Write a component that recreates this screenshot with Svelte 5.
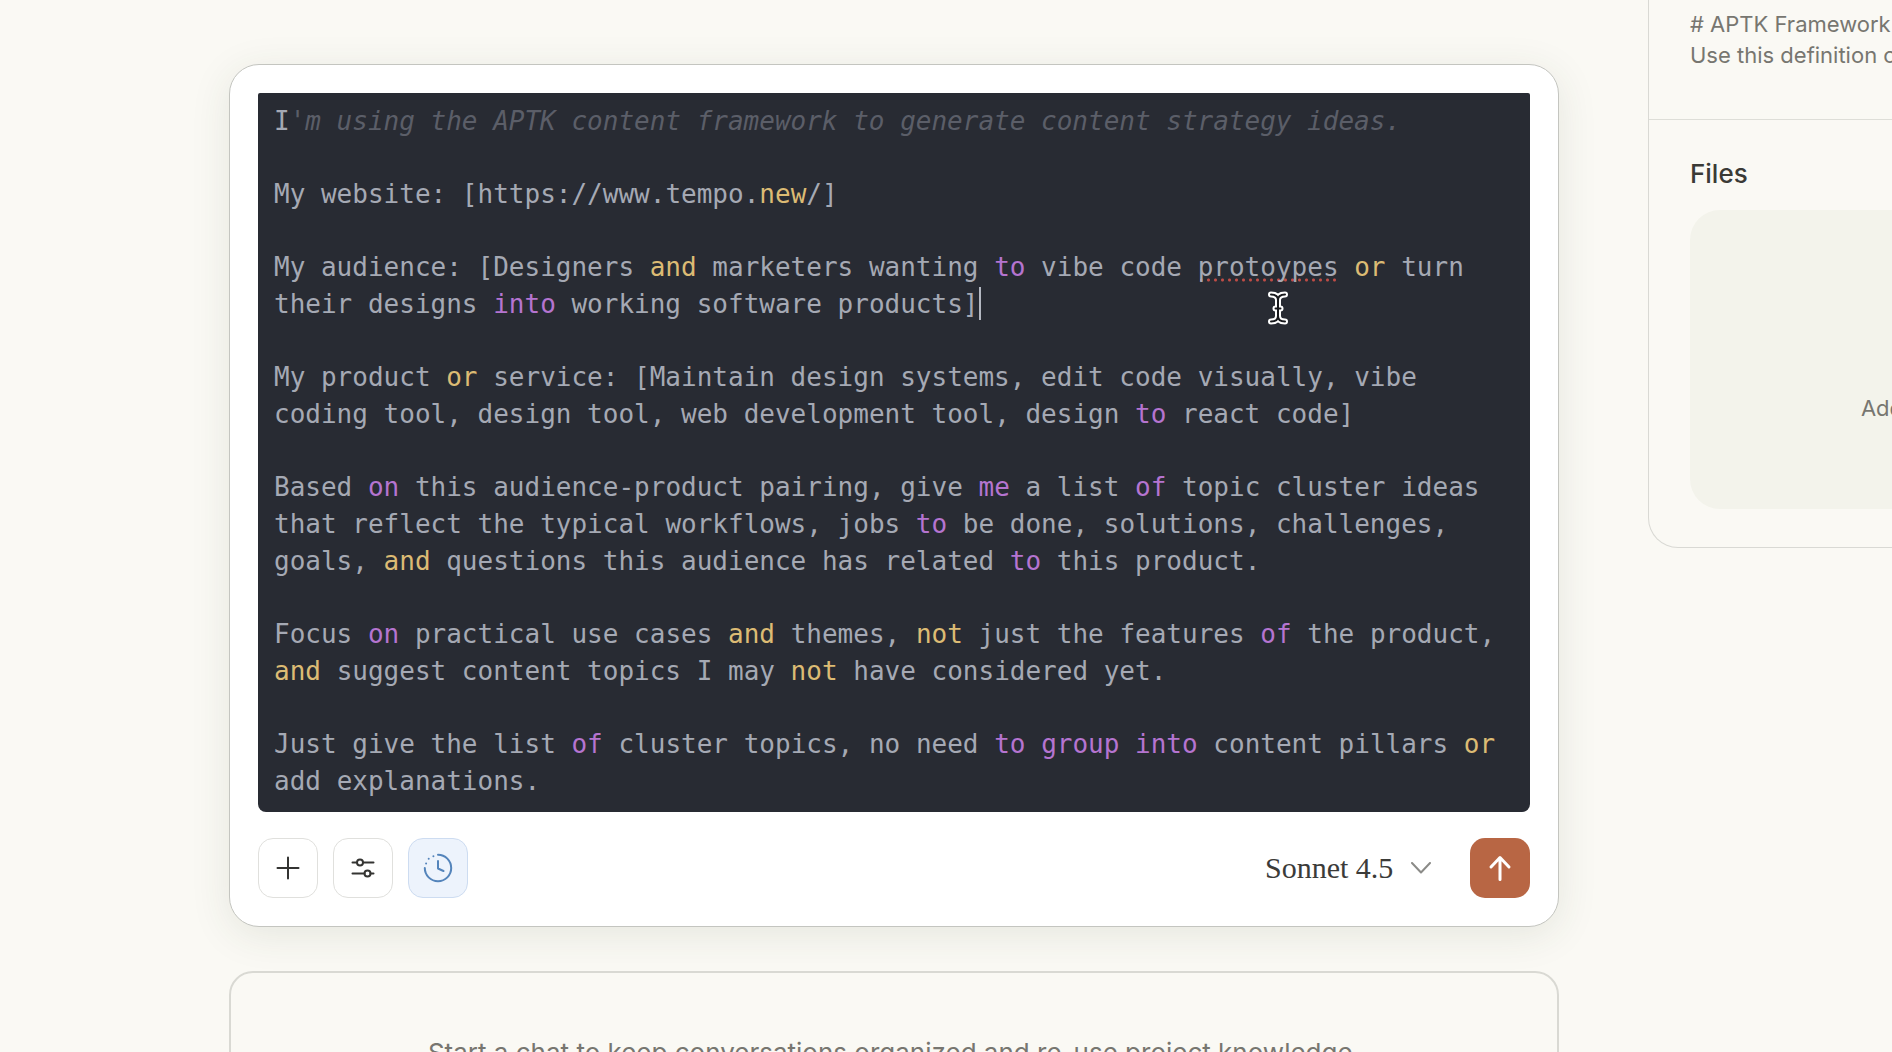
<script lang="ts">
    type Token = { text: string; kind: string };

    const keywords = ["to", "into", "on", "me", "of", "group"];
    const operators = ["and", "or", "not", "new"];
    const typos = ["protoypes"];

    const prompt = [
        "My website: [https://www.tempo.new/]",
        "My audience: [Designers and marketers wanting to vibe code protoypes or turn their designs into working software products]",
        "My product or service: [Maintain design systems, edit code visually, vibe coding tool, design tool, web development tool, design to react code]",
        "Based on this audience-product pairing, give me a list of topic cluster ideas that reflect the typical workflows, jobs to be done, solutions, challenges, goals, and questions this audience has related to this product.",
        "Focus on practical use cases and themes, not just the features of the product, and suggest content topics I may not have considered yet.",
        "Just give the list of cluster topics, no need to group into content pillars or add explanations.",
    ];
    const caret_line = 1;

    // Split a line into words and everything between them
    function tokenize(line: string): Token[] {
        return line.split(/(\w+)/).map((text) => {
            let kind = "plain";
            if (keywords.includes(text)) kind = "keyword";
            if (operators.includes(text)) kind = "operator";
            if (typos.includes(text)) kind = "typo";
            return { text, kind };
        });
    }

    let model = $state("Sonnet 4.5");
    let extended = $state(true);
</script>

<div class="page">
    <main>
        <form class="composer" onsubmit={(e) => e.preventDefault()}>
            <div class="editor">
                <div class="code" role="textbox" aria-multiline="true" aria-label="Prompt" tabindex="0" contenteditable="true" spellcheck="false">
                    <p>I<span class="comment">'m using the APTK content framework to generate content strategy ideas.</span></p>
                    {#each prompt as line, i}
                        <p>{#each tokenize(line) as token}{#if token.kind === "plain"}{token.text}{:else}<span class={token.kind}>{token.text}</span>{/if}{/each}{#if i === caret_line}<span class="caret"></span>{/if}</p>
                    {/each}
                </div>
                <svg class="pointer" viewBox="0 0 20 34" aria-hidden="true">
                    <path class="halo" d="M3 3.5C7 3.5 10 5 10 9V25C10 29 7 30.5 3 30.5M17 3.5C13 3.5 10 5 10 9V25C10 29 13 30.5 17 30.5M7.5 17.5H12.5" />
                    <path class="stem" d="M3 3.5C7 3.5 10 5 10 9V25C10 29 7 30.5 3 30.5M17 3.5C13 3.5 10 5 10 9V25C10 29 13 30.5 17 30.5M7.5 17.5H12.5" />
                </svg>
            </div>
            <div class="toolbar">
                <button type="button" class="tool" aria-label="Add">
                    <svg viewBox="0 0 30 30"><path d="M15 4.5V25.5M4.5 15H25.5" /></svg>
                </button>
                <button type="button" class="tool" aria-label="Tools">
                    <svg viewBox="0 0 30 30">
                        <path d="M4.5 9.500H9M15 9.500H25.500M4.500 20.500H16.500M22.500 20.500H25.500" />
                        <circle cx="12" cy="9.500" r="3" />
                        <circle cx="19.500" cy="20.500" r="3" />
                    </svg>
                </button>
                <button type="button" class="tool" class:active={extended} aria-label="Extended thinking" aria-pressed={extended} onclick={() => (extended = !extended)}>
                    <svg viewBox="0 0 30 30">
                        <path d="M15 1.8A13.200 13.200 0 1 1 1.800 15" />
                        <path d="M15 8V15.500L20.500 18" />
                        <path d="M3.100 10.500h.01M5.700 5.800h.01M10.400 3.200h.01" />
                    </svg>
                </button>
                <label class="model">
                    <select bind:value={model} aria-label="Model">
                        <option>Sonnet 4.5</option>
                    </select>
                    <svg viewBox="0 0 20 12"><path d="M1 1L10 10.500L19 1" /></svg>
                </label>
                <button type="submit" class="send" aria-label="Send">
                    <svg viewBox="0 0 24 26"><path d="M12 24.500V3M3 12L12 2.500L21 12" /></svg>
                </button>
            </div>
        </form>
        <section class="empty">
            <p>Start a chat to keep conversations organized and re-use project knowledge.</p>
        </section>
    </main>

    <aside>
        <div class="panel">
            <p class="instructions"># APTK Framework<br />Use this definition of</p>
            <section class="files">
                <h2>Files</h2>
                <div class="drop">Add</div>
            </section>
        </div>
    </aside>
</div>

<style>
    :global(body) {
        margin: 0;
        background: #faf9f4;
    }
    .page {
        box-sizing: border-box;
        display: grid;
        grid-template-columns: minmax(0, 1fr) 244px;
        gap: 89px;
        height: 100vh;
        padding-left: 229px;
        overflow: hidden;
        font-family: Inter, "Liberation Sans", sans-serif;
        color: #777670;
    }
    p,
    h2 {
        margin: 0;
    }
    svg {
        display: block;
        fill: none;
        stroke: currentColor;
        stroke-width: 2;
        stroke-linecap: round;
        stroke-linejoin: round;
    }
    main {
        display: flex;
        flex-direction: column;
        gap: 44px;
        padding-top: 64px;
    }

    .composer {
        padding: 28px 28px 28px;
        border: 1px solid #c4c5c0;
        border-radius: 30px;
        background: #fff;
        box-shadow: 0 8px 40px rgba(50, 65, 40, 0.1);
    }
    .editor {
        position: relative;
    }
    .code {
        display: flex;
        flex-direction: column;
        gap: 36px;
        padding: 10px 14px 12px 16px;
        border-radius: 2px 2px 8px 8px;
        background: #282b33;
        color: #a5a9b4;
        font-family: "DejaVu Sans Mono", monospace;
        font-size: 26px;
        line-height: 37px;
        outline: none;
    }
    .comment {
        color: #5b5e68;
        font-style: italic;
    }
    .keyword {
        color: #b574d0;
    }
    .operator {
        color: #dcbb74;
    }
    .typo {
        background: radial-gradient(circle, #c04c46 1px, transparent 2px) 0 100% / 7px 4px repeat-x;
    }
    .caret {
        display: inline-block;
        width: 2px;
        height: 33px;
        margin-left: 1px;
        vertical-align: -7px;
        background: #b4b8c2;
    }
    .pointer {
        position: absolute;
        top: 198px;
        left: 1010px;
        width: 20px;
        height: 34px;
    }
    .pointer .halo {
        stroke: #fff;
        stroke-width: 6;
    }
    .pointer .stem {
        stroke: #17181c;
    }

    .toolbar {
        display: flex;
        align-items: center;
        gap: 15px;
        margin-top: 26px;
    }
    button {
        display: flex;
        align-items: center;
        justify-content: center;
        width: 60px;
        height: 60px;
        padding: 0;
        border-radius: 15px;
    }
    .tool {
        border: 1px solid #e0e0dd;
        background: #fff;
        color: #343432;
    }
    .tool svg {
        width: 30px;
        height: 30px;
    }
    .active {
        border-color: #cddcf1;
        background: #edf3fc;
        color: #5484bb;
    }
    .model {
        display: flex;
        align-items: center;
        gap: 17px;
        margin-left: auto;
        margin-right: 24px;
        color: #8b8b88;
    }
    .model svg {
        width: 20px;
        height: 12px;
    }
    select {
        padding: 0 0 2px;
        border: none;
        appearance: none;
        background: none;
        color: #3b3b39;
        font-family: "Liberation Serif", serif;
        font-size: 30px;
    }
    .send {
        border: none;
        background: #b86644;
        color: #fff;
    }
    .send svg {
        width: 24px;
        height: 26px;
        stroke-width: 3;
    }

    .empty {
        height: 300px;
        flex: none;
        border: 2px solid #d9d9d3;
        border-radius: 24px;
    }
    .empty p {
        padding: 62px 30px;
        font-size: 26px;
        line-height: 36px;
        text-align: center;
    }

    .panel {
        box-sizing: border-box;
        width: 468px;
        border: 1px solid #d9d9d4;
        border-top: none;
        border-radius: 0 0 30px 30px;
    }
    .instructions {
        padding: 9px 41px 48px;
        border-bottom: 1px solid #deded8;
        font-size: 22px;
        line-height: 31px;
    }
    .files {
        padding: 36px 41px 38px;
    }
    h2 {
        color: #3a3a36;
        font-size: 26px;
        font-weight: 500;
        line-height: 36px;
    }
    .drop {
        display: flex;
        align-items: center;
        justify-content: center;
        box-sizing: border-box;
        height: 299px;
        margin-top: 18px;
        padding-top: 96px;
        border-radius: 30px;
        background: #f3f3eb;
        font-size: 22px;
    }
</style>
